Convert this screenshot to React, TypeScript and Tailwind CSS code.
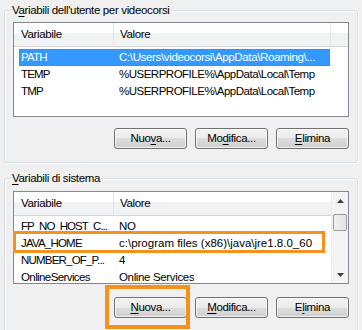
import React from "react";

const btnCls =
  "w-[73px] h-[21px] rounded-[3px] border border-[#707070] bg-[linear-gradient(to_bottom,#f2f2f2_0%,#ebebeb_50%,#dddddd_50%,#cfcfcf_100%)] shadow-[inset_0_0_0_1px_rgba(255,255,255,0.7)] text-black flex items-center justify-center leading-none";

function Btn({ children }: { children: React.ReactNode }) {
  return <div className={btnCls}>{children}</div>;
}

function U({ children }: { children: React.ReactNode }) {
  return <span className="underline underline-offset-[2px]">{children}</span>;
}

type Row = { name: string; value: string; selected?: boolean; nameCls?: string; valueCls?: string };

function Header({ trailingSep }: { trailingSep?: boolean }) {
  return (
    <div className="flex h-[24px] items-center bg-[linear-gradient(to_bottom,#ffffff_0%,#ffffff_45%,#f1f2f4_45%,#f1f2f4_100%)] border-b border-[#d5d5d5] text-black">
      <div className="w-[100px] h-full flex items-center pl-[7px] border-r border-[#e3e5e8]">Variabile</div>
      <div className={"h-full flex items-center pl-[6px] " + (trailingSep ? "w-[217px] border-r border-[#e3e5e8]" : "flex-1")}>Valore</div>
    </div>
  );
}

function Rows({ rows }: { rows: Row[] }) {
  return (
    <div className="pt-[2px]">
      {rows.map((r) => (
        <div
          key={r.name}
          className={
            "ml-[5px] w-[311px] h-[17px] flex items-center whitespace-nowrap border " +
            (r.selected ? "bg-[#3399ff] text-white border-dotted border-[#c86a00]" : "border-transparent text-black")
          }
        >
          <div className={"w-[93px] shrink-0 pl-[1px] " + (r.nameCls ?? "")}>{r.name}</div>
          <div className={"pl-[6px] overflow-hidden " + (r.valueCls ?? "")}>{r.value}</div>
        </div>
      ))}
    </div>
  );
}

function Group({
  title,
  children,
  className,
}: {
  title: React.ReactNode;
  children: React.ReactNode;
  className?: string;
}) {
  return (
    <div
      className={
        "relative mx-[4px] border border-[#d5dfe5] rounded-[3px] shadow-[inset_1px_1px_0_#ffffff,1px_1px_0_#ffffff] px-[8px] " +
        (className ?? "")
      }
    >
      <span className="absolute left-[6px] -top-[8px] px-[1px] bg-[#f0f0f0] leading-[15px] whitespace-nowrap">
        {title}
      </span>
      {children}
    </div>
  );
}

export default function App() {
  const caps = "tracking-[-0.8px]";
  const userRows: Row[] = [
    { name: "PATH", value: "C:\\Users\\videocorsi\\AppData\\Roaming\\...", selected: true, nameCls: caps },
    { name: "TEMP", value: "%USERPROFILE%\\AppData\\Local\\Temp", nameCls: caps, valueCls: "tracking-[-0.5px]" },
    { name: "TMP", value: "%USERPROFILE%\\AppData\\Local\\Temp", nameCls: caps, valueCls: "tracking-[-0.5px]" },
  ];
  const sysRows: Row[] = [
    { name: "FP_NO_HOST_C...", value: "NO", nameCls: "tracking-[-1px]" },
    { name: "JAVA_HOME", value: "c:\\program files (x86)\\java\\jre1.8.0_60", nameCls: caps, valueCls: "tracking-[0px]" },
    { name: "NUMBER_OF_P...", value: "4", nameCls: caps },
    { name: "OnlineServices", value: "Online Services", nameCls: "tracking-[-0.6px]" },
  ];

  return (
    <div className="w-[362px] h-[330px] overflow-hidden bg-[#f0f0f0] text-black text-[11.5px] tracking-[-0.35px] font-['Liberation_Sans',Arial,sans-serif] pt-[10px]">
      <Group
        title={
          <>
            V<U>a</U>riabili dell'utente per videocorsi
          </>
        }
        className="pt-[11px] pb-[13px]"
      >
        <div className="h-[95px] border border-[#828790] bg-white overflow-hidden">
          <Header trailingSep />
          <Rows rows={userRows} />
        </div>
        <div className="mt-[11px] flex justify-end gap-[8px]">
          <Btn>
            Nuo<U>v</U>a...
          </Btn>
          <Btn>
            Mo<U>d</U>ifica...
          </Btn>
          <Btn>
            <U>E</U>limina
          </Btn>
        </div>
      </Group>

      <Group
        title={
          <>
            <U>V</U>ariabili di sistema
          </>
        }
        className="mt-[15px] pt-[12px] pb-[30px]"
      >
        <div className="h-[93px] border border-[#828790] bg-white overflow-hidden flex">
          <div className="w-[317px] overflow-hidden">
            <Header />
            <Rows rows={sysRows} />
          </div>
          <div className="w-[17px] h-full flex flex-col bg-[#f4f4f4] border-l border-[#ececec]">
            <div className="h-[17px] flex items-center justify-center">
              <svg width="7" height="4" viewBox="0 0 7 4">
                <path d="M3.5 0 L7 4 L0 4 Z" fill="#404040" />
              </svg>
            </div>
            <div className="mt-[5px] mx-[1px] h-[17px] rounded-[2px] border border-[#9b9b9b] bg-[linear-gradient(to_right,#f2f2f2,#e2e2e2)]" />
            <div className="flex-1" />
            <div className="h-[17px] flex items-center justify-center">
              <svg width="7" height="4" viewBox="0 0 7 4">
                <path d="M0 0 L7 0 L3.5 4 Z" fill="#404040" />
              </svg>
            </div>
          </div>
        </div>
        <div className="mt-[13px] flex justify-end gap-[8px]">
          <Btn>
            <U>N</U>uova...
          </Btn>
          <Btn>
            <U>M</U>odifica...
          </Btn>
          <Btn>
            E<U>l</U>imina
          </Btn>
        </div>
        <div className="absolute left-[8px] top-[52px] w-[312px] h-[22px] border-[3px] border-[#f5921e] pointer-events-none" />
        <div className="absolute left-[100px] top-[106px] w-[85px] h-[44px] border-[4px] border-[#f5921e] pointer-events-none" />
      </Group>
    </div>
  );
}
